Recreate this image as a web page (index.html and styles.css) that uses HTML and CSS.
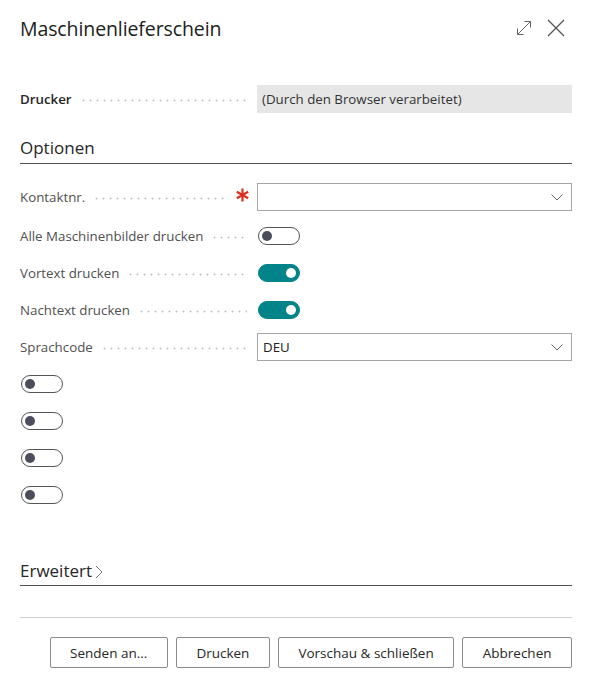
FILE: index.html
```html
<!DOCTYPE html>
<html lang="de">
<head>
<meta charset="utf-8">
<title>Maschinenlieferschein</title>
<link rel="stylesheet" href="styles.css">
</head>
<body>
<div class="dialog">
  <header class="header">
    <h1 class="title">Maschinenlieferschein</h1>
    <div class="header-icons">
      <svg class="icon-expand" width="16" height="16" viewBox="0 0 16 16" aria-hidden="true">
        <path d="M1.5 14.5 L14.5 1.5 M8.5 1.5 H14.5 V7.5 M1.5 8.5 V14.5 H7.5" fill="none" stroke="#666" stroke-width="1"/>
      </svg>
      <svg class="icon-close" width="18" height="18" viewBox="0 0 18 18" aria-hidden="true">
        <path d="M1 1 L17 17 M17 1 L1 17" fill="none" stroke="#555" stroke-width="1.3"/>
      </svg>
    </div>
  </header>

  <div class="row row-printer">
    <div class="label"><span class="label-text strong">Drucker</span><span class="leader"></span></div>
    <div class="control"><div class="readonly">(Durch den Browser verarbeitet)</div></div>
  </div>

  <h2 class="section-title">Optionen</h2>

  <div class="fields">
    <div class="row row-first">
      <div class="label"><span class="label-text">Kontaktnr.</span><span class="leader leader-req"></span>
        <svg class="required" width="13" height="14" viewBox="0 0 13 14" aria-label="erforderlich">
          <path d="M6.5 0.5 V13.5 M0.8 3.7 L12.2 10.3 M0.8 10.3 L12.2 3.7" fill="none" stroke="#d9301c" stroke-width="2.2"/>
        </svg>
      </div>
      <div class="control">
        <div class="select">
          <span class="select-value"></span>
          <svg class="chevron" width="12" height="7" viewBox="0 0 12 7" aria-hidden="true"><path d="M0.5 0.5 L6 6 L11.5 0.5" fill="none" stroke="#666" stroke-width="1"/></svg>
        </div>
      </div>
    </div>
    <div class="row">
      <div class="label"><span class="label-text">Alle Maschinenbilder drucken</span><span class="leader"></span></div>
      <div class="control"><span class="toggle"></span></div>
    </div>
    <div class="row">
      <div class="label"><span class="label-text">Vortext drucken</span><span class="leader"></span></div>
      <div class="control"><span class="toggle on"></span></div>
    </div>
    <div class="row">
      <div class="label"><span class="label-text">Nachtext drucken</span><span class="leader"></span></div>
      <div class="control"><span class="toggle on"></span></div>
    </div>
    <div class="row">
      <div class="label"><span class="label-text">Sprachcode</span><span class="leader"></span></div>
      <div class="control">
        <div class="select">
          <span class="select-value">DEU</span>
          <svg class="chevron" width="12" height="7" viewBox="0 0 12 7" aria-hidden="true"><path d="M0.5 0.5 L6 6 L11.5 0.5" fill="none" stroke="#666" stroke-width="1"/></svg>
        </div>
      </div>
    </div>
    <div class="row row-plain"><span class="toggle"></span></div>
    <div class="row row-plain"><span class="toggle"></span></div>
    <div class="row row-plain"><span class="toggle"></span></div>
    <div class="row row-plain"><span class="toggle"></span></div>
  </div>

  <h2 class="section-title section-advanced">Erweitert<svg class="chev-right" width="8" height="14" viewBox="0 0 8 14" aria-hidden="true"><path d="M1 1 L7 7 L1 13" fill="none" stroke="#777" stroke-width="1"/></svg></h2>

  <div class="separator"></div>

  <div class="actions">
    <button class="btn">Senden an...</button>
    <button class="btn">Drucken</button>
    <button class="btn">Vorschau &amp; schließen</button>
    <button class="btn">Abbrechen</button>
  </div>
</div>
</body>
</html>
```

FILE: styles.css
```css
* { box-sizing: border-box; }
html, body { margin: 0; padding: 0; background: #fff; }
body {
  font-family: "Open Sans", "Noto Sans", "Liberation Sans", sans-serif;
  color: #212121;
  font-size: 13.3px;
}
.dialog { padding: 0 20px; width: 592px; }

.header {
  height: 56px;
  display: flex;
  align-items: center;
  justify-content: space-between;
}
.title {
  margin: 0;
  font-size: 19.5px;
  font-weight: 400;
  color: #212121;
  letter-spacing: -0.1px;
}
.header-icons {
  display: flex;
  align-items: center;
  gap: 15px;
  margin-right: 7px;
}
.icon-expand { margin-top: -1px; }

.row {
  display: flex;
  align-items: center;
  height: 28px;
}
.row-printer { margin-top: 29px; }
.row-first { margin-bottom: 2px; }
.label {
  width: 237px;
  flex-shrink: 0;
  display: flex;
  align-items: center;
}
.label-text { color: #505050; white-space: nowrap; }
.label-text.strong { color: #262626; font-weight: 600; }
.leader {
  flex: 1;
  height: 3px;
  margin: 2px 10px 0 8px;
  background-image: radial-gradient(circle, #c4c4c4 0.8px, transparent 1.2px);
  background-size: 7px 3px;
  background-repeat: repeat-x;
}
.leader.leader-req { margin-right: 7px; }
.required { margin: -4px 8px 0 0; flex-shrink: 0; }
.control { flex: 1; display: flex; align-items: center; height: 100%; }
.readonly {
  width: 100%;
  height: 28px;
  background: #e6e6e6;
  display: flex;
  align-items: center;
  padding-left: 5px;
  color: #333;
}
.select {
  width: 100%;
  height: 28px;
  border: 1px solid #a6a6a6;
  display: flex;
  align-items: center;
  justify-content: space-between;
  padding: 0 8px 0 5px;
  color: #212121;
}
.chevron { margin-top: 1px; }

.toggle {
  display: inline-block;
  width: 42px;
  height: 18px;
  border: 1px solid #555;
  border-radius: 9px;
  position: relative;
  margin-left: 1px;
}
.toggle::after {
  content: "";
  position: absolute;
  left: 3px;
  top: 3px;
  width: 10px;
  height: 10px;
  border-radius: 50%;
  background: #4b4f5c;
}
.toggle.on { background: #008489; border-color: #008489; }
.toggle.on::after { left: auto; right: 3px; background: #fff; }

.section-title {
  margin: 23px 0 0;
  font-size: 17px;
  font-weight: 400;
  line-height: 24px;
  color: #262626;
  padding-bottom: 3px;
  border-bottom: 1px solid #505050;
}
.fields {
  margin-top: 19px;
  display: flex;
  flex-direction: column;
  gap: 9px;
}
.section-advanced {
  margin-top: 50px;
  padding-bottom: 2px;
  display: flex;
  align-items: center;
}
.chev-right { margin-left: 3px; margin-top: 2px; }

.separator {
  margin-top: 31px;
  height: 1px;
  background: #d0d0d0;
}
.actions {
  margin-top: 19px;
  display: flex;
  justify-content: flex-end;
  gap: 8px;
}
.btn {
  height: 31px;
  padding: 0 19.5px;
  border: 1px solid #8a8a8a;
  border-radius: 2px;
  background: #fff;
  font-family: inherit;
  font-size: 13.5px;
  font-weight: 400;
  color: #262626;
}
```
